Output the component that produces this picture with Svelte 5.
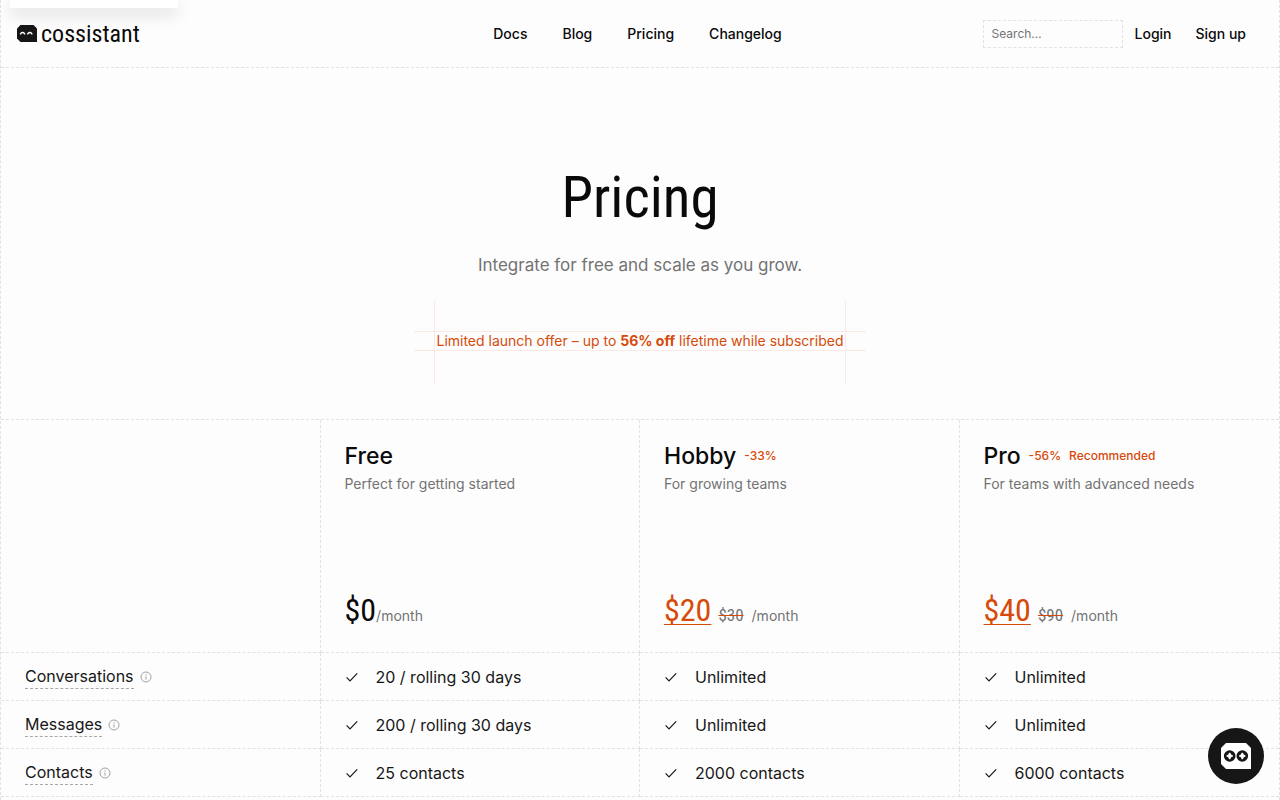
<script>
  const nav = ['Docs', 'Blog', 'Pricing', 'Changelog'];

  const plans = [
    { name: 'Free', tags: [], text: 'Perfect for getting started', price: '$0' },
    { name: 'Hobby', tags: ['-33%'], text: 'For growing teams', price: '$20', was: '$30' },
    { name: 'Pro', tags: ['-56%', 'Recommended'], text: 'For teams with advanced needs', price: '$40', was: '$90' }
  ];

  const features = [
    { name: 'Conversations', values: ['20 / rolling 30 days', 'Unlimited', 'Unlimited'] },
    { name: 'Messages', values: ['200 / rolling 30 days', 'Unlimited', 'Unlimited'] },
    { name: 'Contacts', values: ['25 contacts', '2000 contacts', '6000 contacts'] }
  ];
</script>

<div class="page">
  <div class="peek" aria-hidden="true"></div>

  <header>
    <a class="brand" href="/">
      <svg width="20" height="17" viewBox="0 0 20 17" aria-hidden="true">
        <path d="M3.5 0H16.5L20 3.5V17H3.5L0 13.5V3.5Z" fill="#161616" />
        <path d="M3.6 9.4V8.6Q5.6 6.4 7.6 8.6V9.4M10.8 9.4V8.6Q12.8 6.4 14.8 8.6V9.4" fill="none" stroke="#fff" stroke-width="1.4" />
      </svg>
      <span>cossistant</span>
    </a>
    <nav>
      {#each nav as item}
        <a href="/{item.toLowerCase()}">{item}</a>
      {/each}
    </nav>
    <div class="actions">
      <input type="search" placeholder="Search…" aria-label="Search" />
      <a href="/login">Login</a>
      <a href="/sign-up">Sign up</a>
    </div>
  </header>

  <main>
    <section class="hero">
      <h1>Pricing</h1>
      <p class="lead">Integrate for free and scale as you grow.</p>
      <p class="offer">
        <span>Limited launch offer – up to</span>
        <strong>56% off</strong>
        <span>lifetime while subscribed</span>
      </p>
    </section>

    <table>
      <thead>
        <tr>
          <td></td>
          {#each plans as plan}
            <th scope="col">
              <div class="title">
                <span class="name">{plan.name}</span>
                {#each plan.tags as tag}
                  <span class="tag">{tag}</span>
                {/each}
              </div>
              <p class="about">{plan.text}</p>
              <div class="cost">
                <span class="price" class:deal={plan.was}>{plan.price}</span>
                {#if plan.was}<s>{plan.was}</s>{/if}
                <span class="per">/month</span>
              </div>
            </th>
          {/each}
        </tr>
      </thead>
      <tbody>
        {#each features as feature}
          <tr>
            <th scope="row">
              <div class="label">
                <span>{feature.name}</span>
                <svg width="12" height="12" viewBox="0 0 12 12" fill="none" stroke="#a3a3a3" aria-hidden="true">
                  <circle cx="6" cy="6" r="5" />
                  <path d="M6 5.4V8.6M6 3.2V4.4" />
                </svg>
              </div>
            </th>
            {#each feature.values as value}
              <td>
                <div class="value">
                  <svg width="14" height="14" viewBox="0 0 14 14" fill="none" stroke="#171717" stroke-width="1.2" aria-hidden="true">
                    <path d="M1.6 7.4L5 10.8L12.2 3.4" />
                  </svg>
                  <span>{value}</span>
                </div>
              </td>
            {/each}
          </tr>
        {/each}
      </tbody>
    </table>
  </main>

  <button class="chat" type="button" aria-label="Open chat">
    <svg width="30" height="26" viewBox="0 0 30 26" aria-hidden="true">
      <path d="M5 0H25L30 5V26H5L0 21V5Z" fill="#fff" />
      <circle cx="8.7" cy="13" r="5.8" fill="#161616" />
      <circle cx="21.3" cy="13" r="5.8" fill="#161616" />
      <path d="M8.7 9.9Q9.2 12.5 11.8 13Q9.2 13.5 8.7 16.1Q8.2 13.5 5.6 13Q8.2 12.5 8.7 9.9ZM21.3 9.9Q21.8 12.5 24.4 13Q21.8 13.5 21.3 16.1Q20.8 13.5 18.2 13Q20.8 12.5 21.3 9.9Z" fill="#fff" stroke="#fff" stroke-width="1.2" />
    </svg>
  </button>
</div>

<style>
  :global(body) {
    background: #fdfdfd;
    color: #171717;
    font: 400 16px/24px Inter, 'Liberation Sans', sans-serif;
  }

  .page,
  .page * {
    box-sizing: border-box;
  }

  .page {
    --line: 1px dashed #e2e2e2;
    --accent: #d64a0a;
    --muted: #737373;
    --display: 'Roboto Condensed', Roboto, sans-serif;
    min-height: 100vh;
    border-left: var(--line);
    border-right: var(--line);
  }

  a {
    color: inherit;
    text-decoration: none;
  }

  p,
  h1 {
    margin: 0;
  }

  svg {
    display: block;
    flex: none;
  }

  .peek {
    position: fixed;
    top: 0;
    left: 10px;
    width: 168px;
    height: 8px;
    background: #fff;
    box-shadow: 0 6px 16px rgb(0 0 0 / 16%);
  }

  header {
    display: grid;
    grid-template-columns: 1fr auto 1fr;
    align-items: center;
    height: 68px;
    padding: 0 21px 0 16px;
    border-bottom: var(--line);
    color: #0a0a0a;
    font-size: 14px;
    font-weight: 500;
  }

  .brand {
    display: flex;
    align-items: center;
    gap: 4px;
    font: 400 24px/32px var(--display);
  }

  nav {
    display: flex;
    gap: 35px;
  }

  .actions {
    display: flex;
    align-items: center;
    justify-content: flex-end;
  }

  .actions a {
    padding: 0 12px;
  }

  input {
    width: 140px;
    height: 28px;
    padding: 0 8px;
    border: var(--line);
    border-radius: 0;
    background: transparent;
    color: inherit;
    font: 400 12px/16px Inter, sans-serif;
    appearance: none;
  }

  input::placeholder {
    color: var(--muted);
    opacity: 1;
  }

  .hero {
    display: flex;
    flex-direction: column;
    align-items: center;
    padding: 100px 24px 68px;
    text-align: center;
  }

  h1 {
    color: #0a0a0a;
    font: 400 57px/60px var(--display);
  }

  .lead {
    margin-top: 23px;
    color: var(--muted);
    font-size: 17px;
    line-height: 28px;
  }

  .offer {
    position: relative;
    display: flex;
    flex-wrap: wrap;
    gap: 4px;
    margin-top: 52px;
    padding: 0 2px;
    color: var(--accent);
    font-size: 14px;
    line-height: 20px;
  }

  .offer::before,
  .offer::after {
    content: '';
    position: absolute;
    pointer-events: none;
  }

  .offer::before {
    inset: 0 -20px;
    border: solid #fae9e4;
    border-width: 1px 0;
  }

  .offer::after {
    inset: -30px 0 -33px;
    border: solid #fae9e4;
    border-width: 0 1px;
  }

  table {
    width: 100%;
    border-collapse: separate;
    border-spacing: 0;
    border-top: var(--line);
    table-layout: fixed;
  }

  th,
  td {
    padding: 0 24px;
    border-right: var(--line);
    border-bottom: var(--line);
    font-weight: 400;
    text-align: left;
  }

  th:last-child,
  td:last-child {
    border-right: 0;
  }

  thead th {
    padding: 20px 24px 18px;
    vertical-align: top;
  }

  .title {
    display: flex;
    align-items: center;
    gap: 8px;
    line-height: 32px;
  }

  .name {
    color: #0a0a0a;
    font-size: 23px;
    font-weight: 500;
  }

  .tag {
    color: var(--accent);
    font-size: 12px;
    font-weight: 500;
  }

  .about {
    margin-top: 2px;
    color: var(--muted);
    font-size: 14px;
    line-height: 20px;
  }

  .cost {
    display: flex;
    align-items: baseline;
    margin-top: 98px;
    line-height: 36px;
  }

  .price {
    color: #0a0a0a;
    font-family: var(--display);
    font-size: 32px;
  }

  .deal {
    color: var(--accent);
    text-decoration: underline 1px;
    text-underline-offset: 3px;
  }

  s {
    margin: 0 8px 0 7px;
    color: var(--muted);
    font-family: var(--display);
    font-size: 17px;
    text-decoration: line-through 1px var(--accent);
  }

  .per {
    color: var(--muted);
    font-size: 14px;
  }

  tbody th,
  tbody td {
    height: 48px;
  }

  .label {
    display: flex;
    align-items: center;
    gap: 6px;
  }

  .label span {
    border-bottom: 1px dashed #a8a8a8;
  }

  .value {
    display: flex;
    align-items: center;
    gap: 17px;
  }

  .chat {
    position: fixed;
    right: 16px;
    bottom: 16px;
    display: grid;
    place-items: center;
    width: 56px;
    height: 56px;
    padding: 0;
    border: 0;
    border-radius: 50%;
    background: #161616;
  }
</style>
